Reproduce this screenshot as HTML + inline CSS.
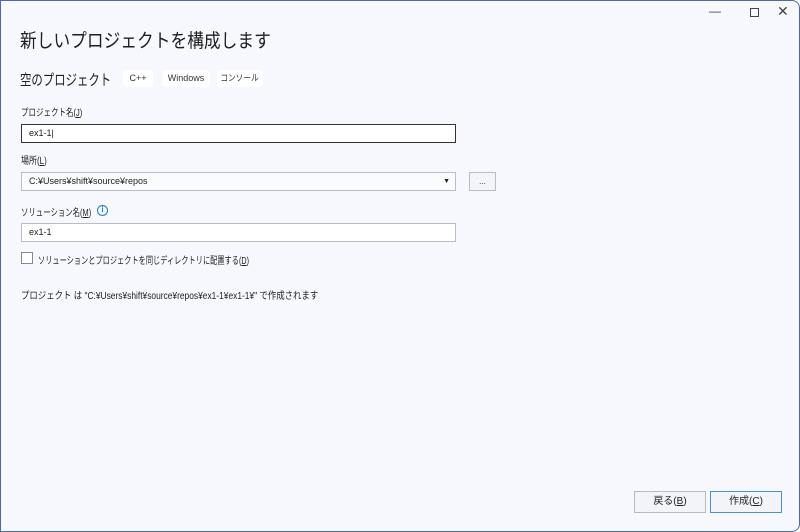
<!DOCTYPE html>
<html><head><meta charset="utf-8"><style>
*{margin:0;padding:0;box-sizing:border-box}
body{width:800px;height:532px;overflow:hidden;background:#fff;font-family:"Liberation Sans","Noto Sans CJK JP",sans-serif;color:#1e1e1e}
.win{position:absolute;left:0;top:0;width:800px;height:532px;background:#f7f8fd;border:1px solid #4a6aa8;border-radius:0 8px 8px 0}
.a{position:absolute;white-space:nowrap;transform-origin:left center}
.lbl{font-size:10px;color:#222}
.inp{position:absolute;background:#fff;border:1px solid #b9bdc8;font-size:9px;padding-left:7px;line-height:17px}
.tag{position:absolute;top:69px;height:17px;background:#fff;border-radius:4px;font-size:9px;text-align:center;line-height:17px;color:#333}
.btn{position:absolute;top:490px;height:22px;width:72px;background:#f2f4f9;border:1px solid #b6bac4;font-size:10px;text-align:center;line-height:20px}
</style></head><body><div class="win">
<div class="a" style="left:708px;top:3px;font-size:12px;color:#444">&#8212;</div>
<div class="a" style="left:749px;top:7px;width:9px;height:9px;border:1px solid #444"></div>
<div class="a" style="left:776px;top:2px;font-size:14px;color:#444">✕</div>
<div class="a" style="left:19px;top:25px;font-size:19px;color:#1e1e1e;transform:scaleX(0.88)">新しいプロジェクトを構成します</div>
<div class="a" style="left:19px;top:68px;font-size:15px;transform:scaleX(0.76)">空のプロジェクト</div>
<div class="tag" style="left:122px;width:30px">C++</div>
<div class="tag" style="left:161px;width:48px">Windows</div>
<div class="tag" style="left:216px;width:46px"><span style="display:inline-block;transform:scaleX(0.85)">コンソール</span></div>
<div class="a lbl" style="left:20px;top:103px;transform:scaleX(0.75)">プロジェクト名(<u>J</u>)</div>
<div class="inp" style="left:20px;top:123px;width:435px;height:19px;border-color:#333">ex1-1|</div>
<div class="a lbl" style="left:20px;top:151px;transform:scaleX(0.8)">場所(<u>L</u>)</div>
<div class="inp" style="left:20px;top:171px;width:435px;height:19px;background:#fafbfd">C:¥Users¥shift¥source¥repos<span style="position:absolute;right:5px;top:0;font-size:7px">▼</span></div>
<div class="inp" style="left:468px;top:171px;width:27px;height:19px;background:#f2f4f9;padding:0;text-align:center;font-size:8px">...</div>
<div class="a lbl" style="left:20px;top:203px;transform:scaleX(0.74)">ソリューション名(<u>M</u>)</div>
<div class="a" style="left:96px;top:204px;width:11px;height:11px;border:1.5px solid #1a7fc4;border-radius:50%;font-size:8px;color:#1a7fc4;text-align:center;line-height:8px;font-weight:bold">i</div>
<div class="inp" style="left:20px;top:222px;width:435px;height:19px">ex1-1</div>
<div class="a" style="left:20px;top:251px;width:12px;height:12px;border:1px solid #888;background:#fff"></div>
<div class="a lbl" style="left:37px;top:251px;transform:scaleX(0.72)">ソリューションとプロジェクトを同じディレクトリに配置する(<u>D</u>)</div>
<div class="a lbl" style="left:20px;top:286px;transform:scaleX(0.84)">プロジェクト は "C:¥Users¥shift¥source¥repos¥ex1-1¥ex1-1¥" で作成されます</div>
<div class="btn" style="left:633px">戻る(<u>B</u>)</div>
<div class="btn" style="left:709px;border-color:#4a90d0">作成(<u>C</u>)</div>
</div></body></html>
